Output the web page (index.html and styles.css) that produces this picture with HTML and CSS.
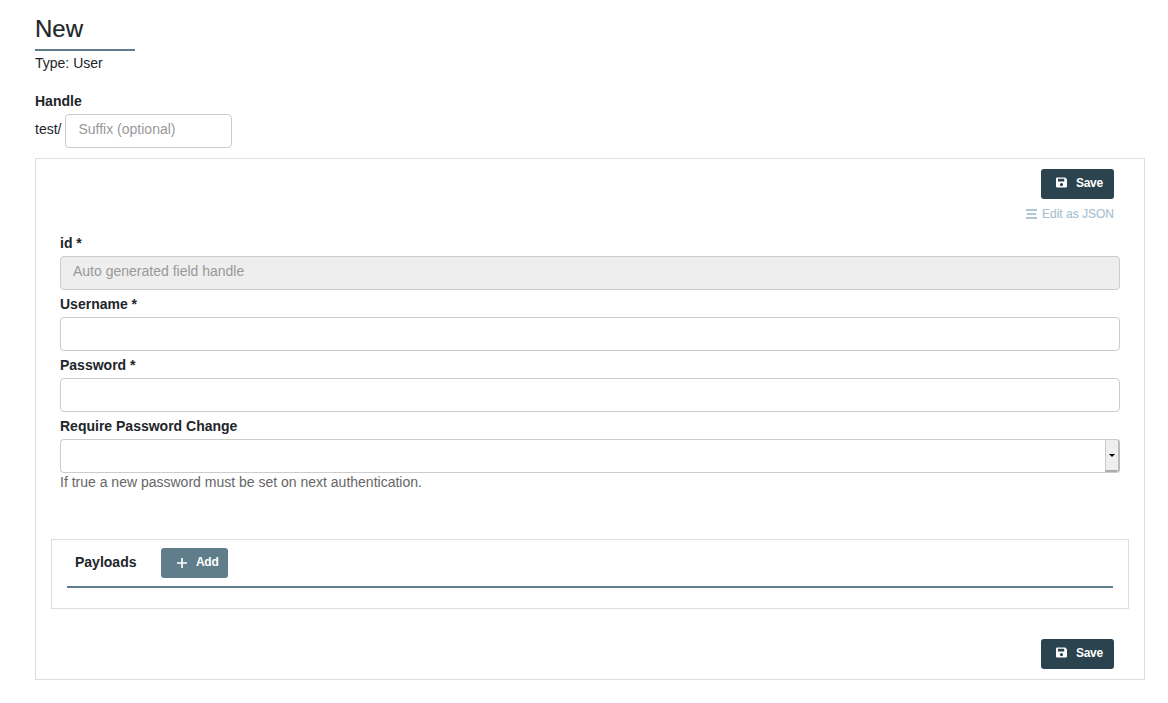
FILE: index.html
```html
<!DOCTYPE html>
<html lang="en">
<head>
<meta charset="utf-8">
<title>New</title>
<link rel="stylesheet" href="styles.css">
</head>
<body>
<main class="page">
  <h1 class="title">New</h1>
  <div class="type">Type: User</div>
  <div class="handle-label">Handle</div>
  <div class="handle-row">
    <span class="prefix">test/</span>
    <input class="input suffix" type="text" placeholder="Suffix (optional)">
  </div>
  <section class="panel">
    <div class="actions">
      <button class="btn btn-save" type="button">
        <svg class="ico-save" viewBox="0 1 11 10"><path fill-rule="evenodd" d="M1.2 1h8L11 2.8v7a1.2 1.2 0 0 1-1.2 1.2H1.200A1.200 1.200 0 0 1 0 9.800V2.200A1.200 1.200 0 0 1 1.200 1zM2 2.300v2.700h6.200V2.300zM5.500 6.500a1.600 1.600 0 1 0 0 3.200a1.600 1.600 0 0 0 0-3.200z"/></svg>
        <span class="btn-text">Save</span>
      </button>
    </div>
    <div class="json-row">
      <a class="json-link" href="#">
        <svg class="ico-lines" viewBox="0 0 11 10"><rect x="0" y="0" width="11" height="2"/><rect x="1" y="4" width="9" height="2"/><rect x="0" y="8" width="11" height="2"/></svg>
        Edit as JSON
      </a>
    </div>
    <label class="label label-first">id *</label>
    <input class="input input-wide" type="text" placeholder="Auto generated field handle" disabled>
    <label class="label">Username *</label>
    <input class="input input-wide" type="text">
    <label class="label">Password *</label>
    <input class="input input-wide" type="password">
    <label class="label">Require Password Change</label>
    <div class="select">
      <span class="select-value"></span>
      <span class="select-arrow"><i class="caret"></i></span>
    </div>
    <p class="help">If true a new password must be set on next authentication.</p>
    <section class="payloads">
      <div class="payloads-head">
        <span class="payloads-title">Payloads</span>
        <button class="btn btn-add" type="button">
          <svg class="ico-plus" viewBox="0 0 12 12"><path d="M5 0h2v5h5v2H7v5H5V7H0V5h5z"/></svg>
          <span class="btn-text">Add</span>
        </button>
      </div>
    </section>
    <div class="actions actions-bottom">
      <button class="btn btn-save" type="button">
        <svg class="ico-save" viewBox="0 1 11 10"><path fill-rule="evenodd" d="M1.2 1h8L11 2.8v7a1.2 1.2 0 0 1-1.2 1.2H1.200A1.200 1.200 0 0 1 0 9.800V2.200A1.200 1.200 0 0 1 1.200 1zM2 2.300v2.700h6.200V2.300zM5.500 6.500a1.600 1.600 0 1 0 0 3.200a1.600 1.600 0 0 0 0-3.200z"/></svg>
        <span class="btn-text">Save</span>
      </button>
    </div>
  </section>
</main>
</body>
</html>
```
FILE: styles.css
```css
* { box-sizing: border-box; }
html, body { margin: 0; padding: 0; background: #fff; }
body {
  font-family: "Liberation Sans", Arial, sans-serif;
  font-size: 14px;
  line-height: 20px;
  color: #212529;
}
.page { width: 1110px; margin-left: 35px; padding-top: 14px; }
.title {
  width: 100px;
  height: 37px;
  margin: 0;
  font-size: 24px;
  font-weight: 400;
  line-height: 30px;
  -webkit-text-stroke: 0.2px #212529;
  border-bottom: 2px solid #607d8b;
}
.type { margin-top: 2px; height: 20px; }
.handle-label { margin-top: 18px; font-weight: 700; height: 20px; }
.handle-row { display: flex; align-items: center; margin-top: 3px; gap: 4px; }
.prefix { position: relative; top: -2px; }
.input {
  display: block;
  height: 34px;
  padding: 4px 12px 8px;
  border: 1px solid #ccc;
  border-radius: 4px;
  background: #fff;
  font: 14px/20px "Liberation Sans", Arial, sans-serif;
  color: #555;
  outline: 0;
}
.input::placeholder { color: #999; opacity: 1; }
.input:disabled { background: #eee; }
.suffix { width: 167px; }
.input-wide { width: 1060px; }
.panel {
  height: 522px;
  margin-top: 10px;
  padding: 10px 15px 0;
  border: 1px solid #ddd;
}
.panel > .label, .panel > .input, .panel > .select, .panel > .help { margin-left: 9px; }
.actions { display: flex; justify-content: flex-end; padding-right: 15px; }
.actions-bottom { margin-top: 30px; }
.btn {
  display: inline-flex;
  align-items: center;
  height: 30px;
  border: 0;
  border-radius: 3px;
  color: #fff;
  font: 700 12px/16px "Liberation Sans", Arial, sans-serif;
  letter-spacing: -0.3px;
  padding: 0;
}
.btn-text { position: relative; top: -1px; }
.btn-save { width: 73px; background: #2a434e; padding-left: 15px; gap: 9px; }
.ico-save { width: 11px; height: 11px; fill: #fff; flex: none; margin-top: -3px; }
.json-row { display: flex; justify-content: flex-end; margin-top: 7px; padding-right: 15px; height: 16px; }
.json-link {
  display: inline-flex;
  align-items: center;
  gap: 5px;
  font-size: 12px;
  line-height: 16px;
  color: #a9c3d1;
  -webkit-text-stroke: 0.2px #a9c3d1;
  text-decoration: none;
}
.ico-lines { width: 11px; height: 10px; fill: #adc6d4; flex: none; }
.label { display: block; height: 20px; margin-top: 4px; margin-bottom: 3px; font-weight: 700; }
.label-first { margin-top: 11px; }
.select {
  display: flex;
  width: 1060px;
  height: 34px;
  border: 1px solid #ccc;
  border-right: 2px solid #bbb;
  border-radius: 4px;
  background: #fff;
  overflow: hidden;
}
.select-value { flex: 1; }
.select-arrow {
  display: flex;
  width: 13px;
  align-items: center;
  justify-content: center;
  background: #eee;
  border-left: 1px solid #ccc;
  border-bottom: 2px solid #aaa;
}
.caret {
  width: 0;
  height: 0;
  border-left: 3px solid transparent;
  border-right: 3px solid transparent;
  border-top: 3px solid #000;
}
.help { margin: 0; padding-top: 0; height: 20px; font-size: 14px; line-height: 18px; color: #666; }
.payloads {
  height: 70px;
  margin-top: 46px;
  padding: 8px 15px 0;
  border: 1px solid #ddd;
}
.payloads-head {
  display: flex;
  align-items: center;
  height: 40px;
  padding-bottom: 8px;
  border-bottom: 2px solid #607d8b;
}
.payloads-title { width: 94px; padding-left: 8px; padding-bottom: 2px; font-weight: 700; }
.btn-add { width: 67px; background: #607d8b; padding-left: 16px; gap: 9px; }
.ico-plus { width: 10px; height: 10px; fill: #fff; flex: none; margin-top: -1px; }
```
